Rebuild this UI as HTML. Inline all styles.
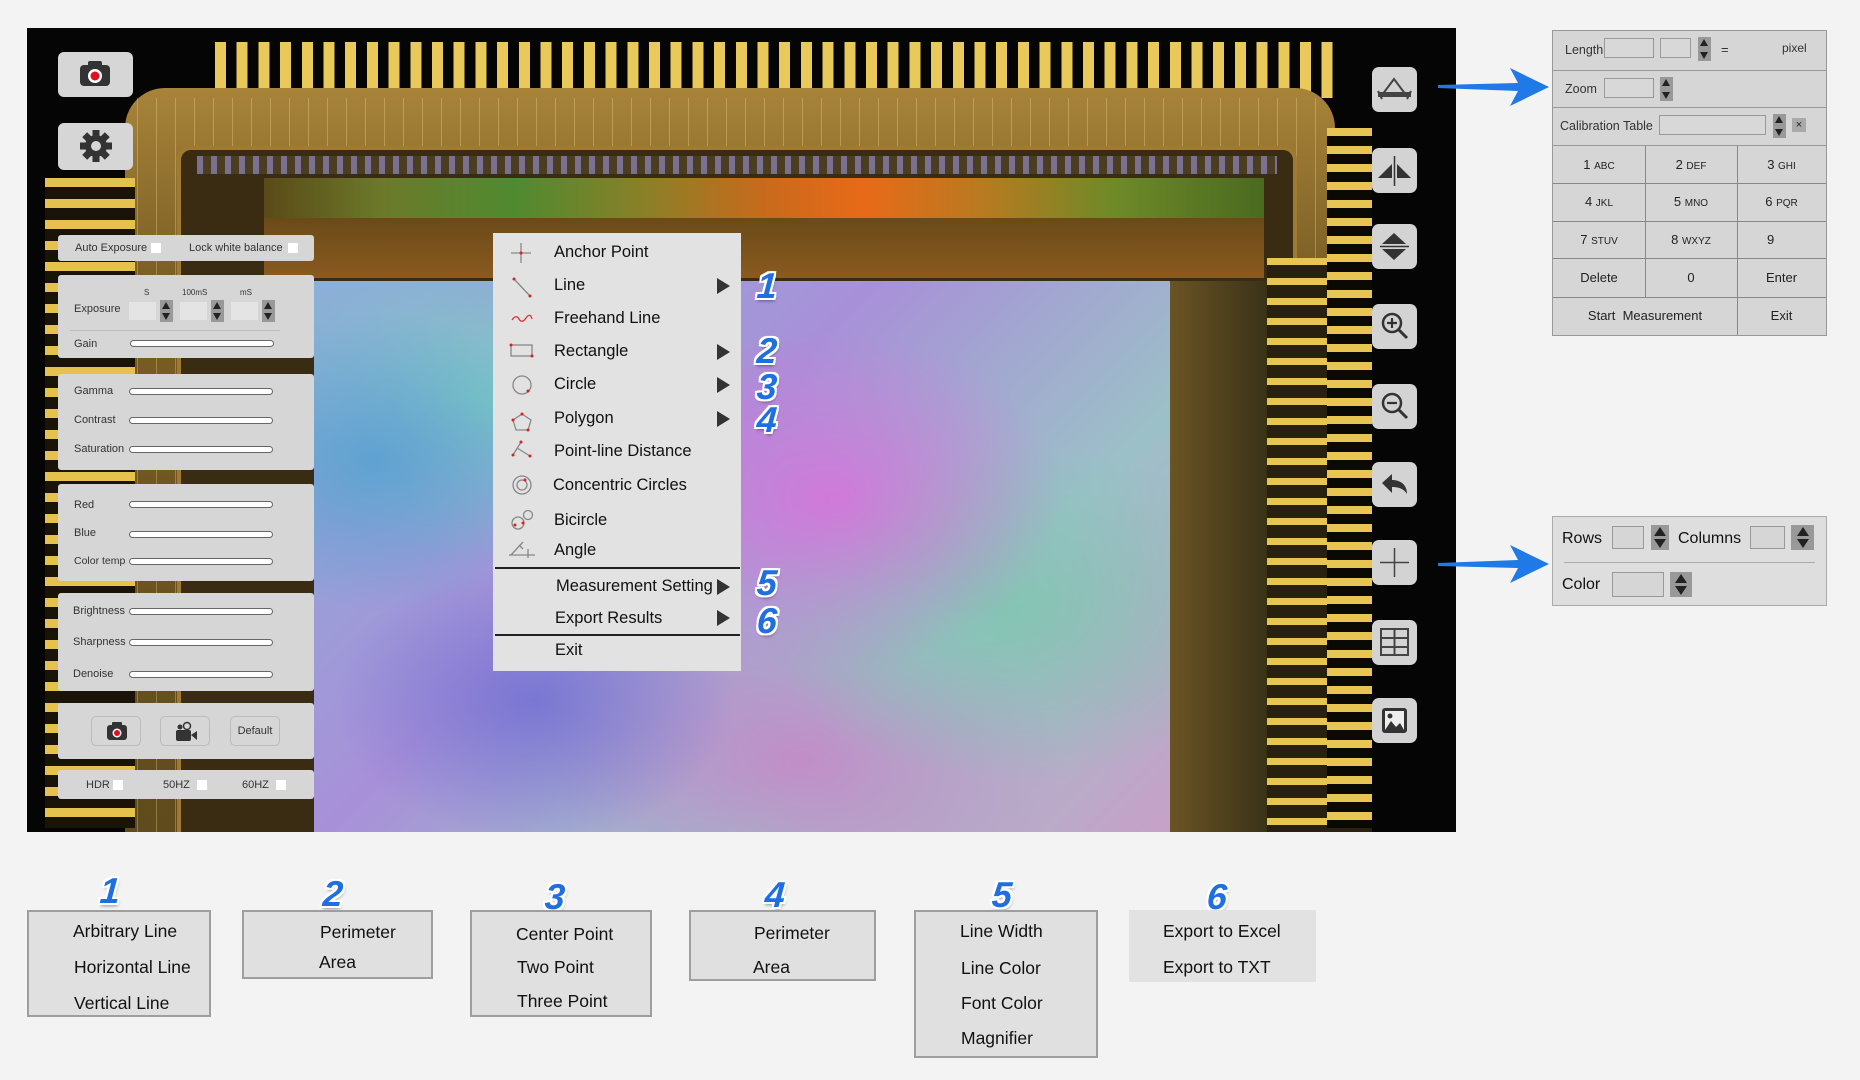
<!DOCTYPE html>
<html><head><meta charset="utf-8">
<style>
*{margin:0;padding:0;box-sizing:border-box}
body{width:1860px;height:1080px;background:#f3f3f3;position:relative;overflow:hidden;font-family:"Liberation Sans",Arial,sans-serif;color:#222}
.a{position:absolute}
.pan{position:absolute;background:#d6d6d6;border-radius:3px}
.lbl{position:absolute;font-size:11px;color:#333}
.sl{position:absolute;height:7px;background:#fff;border:1.5px solid #666;border-radius:4px}
.cb{position:absolute;width:10px;height:10px;background:#fff}
.rb{position:absolute;left:1372px;width:45px;height:45px;background:#d3d3d3;border-radius:7px}
.rb svg{position:absolute;left:0;top:0}
.mi{position:absolute;left:554px;font-size:16.5px;color:#111}
.tri{position:absolute;left:717px;width:0;height:0;border-top:8px solid transparent;border-bottom:8px solid transparent;border-left:13px solid #333}
.num{position:absolute;font-size:36px;font-weight:bold;font-style:italic;color:#1f6fe0;line-height:40px;text-shadow:-2px -2px 0 #fff,2px -2px 0 #fff,-2px 2px 0 #fff,2px 2px 0 #fff,0 2px 0 #fff,0 -2px 0 #fff,2px 0 0 #fff,-2px 0 0 #fff,1px 3px 3px rgba(0,0,0,.4);transform:skewX(-4deg)}
.box{position:absolute;background:#e0e0e0;border:2px solid #9e9e9e;font-size:17.5px;color:#111}
.box div{position:absolute}
.kp{position:absolute;border-right:1px solid #888;border-bottom:1px solid #888;font-size:13px;text-align:center;color:#222}
.kp small{font-size:10px}
.inp{position:absolute;background:#d8d8d8;border:1px solid #999}
.spin{position:absolute;width:13px;height:22px;background:#999}
.spin:before{content:"";position:absolute;left:2px;top:2px;border-left:4.5px solid transparent;border-right:4.5px solid transparent;border-bottom:7px solid #222}
.spin:after{content:"";position:absolute;left:2px;bottom:2px;border-left:4.5px solid transparent;border-right:4.5px solid transparent;border-top:7px solid #222}
.sp2{position:absolute;background:#999}
.sp2:before{content:"";position:absolute;left:50%;margin-left:-6px;top:2px;border-left:6px solid transparent;border-right:6px solid transparent;border-bottom:9px solid #222}
.sp2:after{content:"";position:absolute;left:50%;margin-left:-6px;bottom:2px;border-left:6px solid transparent;border-right:6px solid transparent;border-top:9px solid #222}
</style></head><body>

<!-- main image -->
<div class="a" style="left:27px;top:28px;width:1429px;height:804px;background:#050505;overflow:hidden">
  <div class="a" style="left:188px;top:14px;width:1120px;height:56px;background:repeating-linear-gradient(90deg,#e8c95a 0 11px,transparent 11px 21.7px)"></div>
  <div class="a" style="left:98px;top:60px;width:1210px;height:770px;border-radius:40px 40px 0 0;background:linear-gradient(180deg,#a8843a,#7a5e24 25%,#5e4a1c)"></div>
  <div class="a" style="left:110px;top:70px;width:1190px;height:750px;background:repeating-linear-gradient(90deg,rgba(255,230,150,.3) 0 1px,transparent 1px 19px)"></div>
  <div class="a" style="left:150px;top:118px;width:1120px;height:700px;background:#3a2c12;border-radius:14px;border:4px solid #a07a30"></div>
  <div class="a" style="left:170px;top:128px;width:1080px;height:18px;background:repeating-linear-gradient(90deg,#7a7090 0 6px,#4a3d20 6px 14px)"></div>
  <div class="a" style="left:237px;top:150px;width:1000px;height:40px;background:linear-gradient(90deg,#5a4a18,#6c7a2a 12%,#4f8a30 25%,#8a8028 38%,#c86a1c 50%,#e86a18 60%,#b87a20 72%,#6e8a28 85%,#4a6a20)"></div>
  <div class="a" style="left:237px;top:190px;width:1000px;height:60px;background:linear-gradient(180deg,#6a4a18,#8a5a20)"></div>
  <div class="a" style="left:18px;top:150px;width:90px;height:650px;background:repeating-linear-gradient(180deg,#e5c14e 0 9px,#1a1408 9px 21px)"></div>
  <div class="a" style="left:1240px;top:230px;width:105px;height:574px;background:repeating-linear-gradient(180deg,#e8c452 0 7px,#2a2010 7px 20px)"></div>
  <div class="a" style="left:1300px;top:100px;width:45px;height:700px;background:repeating-linear-gradient(180deg,#e8c452 0 8px,#0b0904 8px 18px)"></div>
  <div class="a" style="left:1143px;top:253px;width:97px;height:551px;background:linear-gradient(90deg,#6a5424,#3a3218)"></div>
  <div class="a" style="left:287px;top:253px;width:856px;height:551px;background:
    radial-gradient(ellipse 200px 150px at 60px 180px,rgba(90,160,210,.9),transparent),
    radial-gradient(ellipse 220px 160px at 170px 120px,rgba(120,210,190,.85),transparent),
    radial-gradient(ellipse 230px 170px at 520px 220px,rgba(220,110,220,.8),transparent),
    radial-gradient(ellipse 260px 170px at 700px 330px,rgba(120,200,170,.7),transparent),
    radial-gradient(ellipse 200px 140px at 220px 420px,rgba(110,110,210,.8),transparent),
    radial-gradient(ellipse 260px 170px at 490px 480px,rgba(210,120,200,.7),transparent),
    linear-gradient(135deg,#8ab0d8,#a890d8 40%,#9cc0c8 70%,#c8a0c8)"></div>
</div>

<!-- left buttons -->
<div class="a" style="left:58px;top:52px;width:75px;height:45px;background:#d6d6d6;border-radius:6px">
<svg width="75" height="45"><rect x="22" y="13" width="30" height="21" rx="4" fill="#333"/><rect x="30" y="9" width="14" height="6" rx="2" fill="#333"/><circle cx="37" cy="24" r="7" fill="#fff"/><circle cx="37" cy="24" r="4.5" fill="#e01020"/></svg></div>
<div class="a" style="left:58px;top:123px;width:75px;height:47px;background:#d6d6d6;border-radius:6px">
<svg width="75" height="47"><g transform="translate(38,23)" fill="#333"><circle r="11"/><g id="t"><rect x="-3.5" y="-16" width="7" height="8"/></g><use href="#t" transform="rotate(45)"/><use href="#t" transform="rotate(90)"/><use href="#t" transform="rotate(135)"/><use href="#t" transform="rotate(180)"/><use href="#t" transform="rotate(225)"/><use href="#t" transform="rotate(270)"/><use href="#t" transform="rotate(315)"/><circle r="5" fill="#d6d6d6"/></g></svg></div>

<!-- left panels -->
<div class="pan" style="left:58px;top:235px;width:256px;height:26px"></div>
<div class="lbl" style="left:75px;top:242px">Auto Exposure</div><div class="cb" style="left:151px;top:243px"></div>
<div class="lbl" style="left:189px;top:242px">Lock white balance</div><div class="cb" style="left:288px;top:243px"></div>

<div class="pan" style="left:58px;top:275px;width:256px;height:83px"></div>
<div class="lbl" style="left:144px;top:288px;font-size:8px">S</div>
<div class="lbl" style="left:182px;top:288px;font-size:8px">100mS</div>
<div class="lbl" style="left:240px;top:288px;font-size:8px">mS</div>
<div class="lbl" style="left:74px;top:303px">Exposure</div>
<div class="inp" style="left:129px;top:302px;width:27px;height:18px;background:#e4e4e4;border:none"></div><div class="spin" style="left:160px;top:300px"></div>
<div class="inp" style="left:180px;top:302px;width:27px;height:18px;background:#e4e4e4;border:none"></div><div class="spin" style="left:211px;top:300px"></div>
<div class="inp" style="left:231px;top:302px;width:27px;height:18px;background:#e4e4e4;border:none"></div><div class="spin" style="left:262px;top:300px"></div>
<div class="a" style="left:70px;top:330px;width:210px;height:1px;background:#bbb"></div>
<div class="lbl" style="left:74px;top:338px">Gain</div><div class="sl" style="left:130px;top:340px;width:144px"></div>

<div class="pan" style="left:58px;top:374px;width:256px;height:96px"></div>
<div class="lbl" style="left:74px;top:385px">Gamma</div><div class="sl" style="left:129px;top:388px;width:144px"></div>
<div class="lbl" style="left:74px;top:414px">Contrast</div><div class="sl" style="left:129px;top:417px;width:144px"></div>
<div class="lbl" style="left:74px;top:443px">Saturation</div><div class="sl" style="left:129px;top:446px;width:144px"></div>

<div class="pan" style="left:58px;top:484px;width:256px;height:97px"></div>
<div class="lbl" style="left:74px;top:499px">Red</div><div class="sl" style="left:129px;top:501px;width:144px"></div>
<div class="lbl" style="left:74px;top:527px">Blue</div><div class="sl" style="left:129px;top:531px;width:144px"></div>
<div class="lbl" style="left:74px;top:555px;font-size:10.5px">Color temp</div><div class="sl" style="left:129px;top:558px;width:144px"></div>

<div class="pan" style="left:58px;top:593px;width:256px;height:98px"></div>
<div class="lbl" style="left:73px;top:605px">Brightness</div><div class="sl" style="left:129px;top:608px;width:144px"></div>
<div class="lbl" style="left:73px;top:636px">Sharpness</div><div class="sl" style="left:129px;top:639px;width:144px"></div>
<div class="lbl" style="left:73px;top:668px">Denoise</div><div class="sl" style="left:129px;top:671px;width:144px"></div>

<div class="pan" style="left:58px;top:703px;width:256px;height:56px"></div>
<div class="a" style="left:91px;top:716px;width:50px;height:30px;border:1px solid #bbb;border-radius:5px">
<svg width="50" height="30"><rect x="15" y="8" width="20" height="15" rx="3" fill="#333"/><rect x="20" y="5" width="10" height="5" rx="1" fill="#333"/><circle cx="25" cy="16" r="4.5" fill="#fff"/><circle cx="25" cy="16" r="3" fill="#e01020"/></svg></div>
<div class="a" style="left:160px;top:716px;width:50px;height:30px;border:1px solid #bbb;border-radius:5px">
<svg width="50" height="30"><rect x="15" y="13" width="15" height="11" rx="2" fill="#333"/><polygon points="30,18 36,14 36,23" fill="#333"/><circle cx="19" cy="10" r="2.5" fill="#333"/><circle cx="26" cy="9" r="3.5" fill="none" stroke="#333" stroke-width="1.5"/></svg></div>
<div class="a" style="left:230px;top:716px;width:50px;height:30px;border:1px solid #bbb;border-radius:5px;font-size:11px;text-align:center;line-height:28px;color:#333">Default</div>

<div class="pan" style="left:58px;top:770px;width:256px;height:29px"></div>
<div class="lbl" style="left:86px;top:779px">HDR</div><div class="cb" style="left:113px;top:780px"></div>
<div class="lbl" style="left:163px;top:779px">50HZ</div><div class="cb" style="left:197px;top:780px"></div>
<div class="lbl" style="left:242px;top:779px">60HZ</div><div class="cb" style="left:276px;top:780px"></div>

<!-- context menu -->
<div class="a" style="left:493px;top:233px;width:248px;height:438px;background:#e2e2e2"></div>
<div class="a" style="left:495px;top:567px;width:245px;height:2px;background:#222"></div>
<div class="a" style="left:495px;top:634px;width:245px;height:2px;background:#222"></div>
<svg class="a" style="left:493px;top:233px" width="80" height="330">
 <g stroke="#888" stroke-width="1.3" fill="none">
  <path d="M28 10v20M18 20h20"/>
  <path d="M21 46l16 17"/>
  <rect x="18" y="112" width="21" height="11"/>
  <circle cx="29" cy="152" r="9"/>
  <polygon points="29,181 38,187 35,197 23,197 20,187"/>
  <path d="M28 209l-8 13M24 215l13 8"/>
  <circle cx="29" cy="252" r="9"/><circle cx="29" cy="252" r="5"/>
  <circle cx="25" cy="290" r="6"/><circle cx="35" cy="282" r="4.5"/>
  <path d="M16 322h26M18 322l12-13M26 312l4 4M35 316v9"/>
 </g>
 <g fill="#e02020">
  <circle cx="28" cy="20" r="1.5"/><circle cx="21" cy="46" r="1.5"/><circle cx="37" cy="63" r="1.5"/>
  <circle cx="18" cy="112" r="1.5"/><circle cx="39" cy="123" r="1.5"/>
  <circle cx="35" cy="158" r="1.5"/><circle cx="29" cy="181" r="1.5"/><circle cx="20" cy="187" r="1.5"/><circle cx="35" cy="197" r="1.5"/>
  <circle cx="28" cy="209" r="1.5"/><circle cx="20" cy="222" r="1.5"/><circle cx="37" cy="223" r="1.5"/>
  <circle cx="32" cy="247" r="1.5"/><circle cx="22" cy="292" r="1.5"/><circle cx="30" cy="290" r="1.5"/>
 </g>
 <path d="M19 87q4-6 7-1t7-1 6 1" stroke="#e03030" stroke-width="1.3" fill="none"/>
</svg>
<div class="mi" style="top:243px">Anchor Point</div>
<div class="mi" style="top:276px">Line</div><div class="tri" style="top:278px"></div>
<div class="mi" style="top:309px">Freehand Line</div>
<div class="mi" style="top:342px">Rectangle</div><div class="tri" style="top:344px"></div>
<div class="mi" style="top:375px">Circle</div><div class="tri" style="top:377px"></div>
<div class="mi" style="top:409px">Polygon</div><div class="tri" style="top:411px"></div>
<div class="mi" style="top:442px">Point-line Distance</div>
<div class="mi" style="top:476px;left:553px">Concentric Circles</div>
<div class="mi" style="top:511px">Bicircle</div>
<div class="mi" style="top:541px">Angle</div>
<div class="mi" style="top:577px;left:556px">Measurement Setting</div><div class="tri" style="top:579px"></div>
<div class="mi" style="top:609px;left:555px">Export Results</div><div class="tri" style="top:610px"></div>
<div class="mi" style="top:641px;left:555px">Exit</div>

<div class="num" style="left:757px;top:266px">1</div>
<div class="num" style="left:757px;top:331px">2</div>
<div class="num" style="left:757px;top:367px">3</div>
<div class="num" style="left:757px;top:400px">4</div>
<div class="num" style="left:757px;top:563px">5</div>
<div class="num" style="left:757px;top:601px">6</div>

<!-- right buttons -->
<div class="rb" style="top:67px"><svg width="45" height="45"><path d="M10 28l12-16 12 16" fill="none" stroke="#444" stroke-width="2"/><rect x="6" y="25" width="33" height="5" fill="#444"/><path d="M6 24l4 8M39 24l-4 8" stroke="#444" stroke-width="2"/></svg></div>
<div class="rb" style="top:148px"><svg width="45" height="45"><polygon points="6,30 20,16 20,30" fill="#333"/><polygon points="39,30 25,16 25,30" fill="#333"/><path d="M22.5 8v30" stroke="#333" stroke-width="1.5"/></svg></div>
<div class="rb" style="top:224px"><svg width="45" height="45"><polygon points="22,9 34,20 10,20" fill="#333"/><polygon points="22,36 34,25 10,25" fill="#333"/><path d="M8 22.5h29" stroke="#333" stroke-width="1.5"/></svg></div>
<div class="rb" style="top:304px"><svg width="45" height="45"><circle cx="20" cy="19" r="9" fill="none" stroke="#333" stroke-width="2.5"/><path d="M26 25l9 9" stroke="#333" stroke-width="3"/><path d="M20 14v10M15 19h10" stroke="#333" stroke-width="2.2"/></svg></div>
<div class="rb" style="top:384px"><svg width="45" height="45"><circle cx="20" cy="19" r="9" fill="none" stroke="#333" stroke-width="2.5"/><path d="M26 25l9 9" stroke="#333" stroke-width="3"/><path d="M15 19h10" stroke="#333" stroke-width="2.2"/></svg></div>
<div class="rb" style="top:462px"><svg width="45" height="45"><path d="M10 21l10-9v6c9 0 15 5 15 14-3-5-8-7-15-7v6z" fill="#333"/></svg></div>
<div class="rb" style="top:540px"><svg width="45" height="45"><path d="M22.5 8v29M8 22.5h29" stroke="#444" stroke-width="1.5"/></svg></div>
<div class="rb" style="top:620px"><svg width="45" height="45"><g fill="none" stroke="#444" stroke-width="2"><rect x="9" y="9" width="27" height="26"/><path d="M22.5 9v26M9 18h27M9 27h27"/></g></svg></div>
<div class="rb" style="top:698px"><svg width="45" height="45"><rect x="10" y="10" width="25" height="25" rx="3" fill="#333"/><rect x="13" y="13" width="19" height="19" fill="#eee"/><polygon points="13,32 19,23 24,29 28,25 32,32" fill="#333"/><circle cx="18" cy="18" r="2.5" fill="#333"/></svg></div>

<!-- arrows -->
<svg class="a" style="left:1430px;top:60px" width="125" height="60"><polygon points="8,25 88,23 80,8 119,27 80,46 88,31 8,28" fill="#1f7ae8"/></svg>
<svg class="a" style="left:1430px;top:536px" width="125" height="60"><polygon points="8,27 88,24 80,9 119,28 80,47 88,32 8,30" fill="#1f7ae8"/></svg>

<!-- calibration panel -->
<div class="a" style="left:1552px;top:30px;width:275px;height:306px;background:#d6d6d6;border:1.5px solid #999"></div>
<div class="a" style="left:1552px;top:70px;width:275px;height:1px;background:#999"></div>
<div class="a" style="left:1552px;top:107px;width:275px;height:1px;background:#999"></div>
<div class="a" style="left:1552px;top:145px;width:275px;height:1px;background:#999"></div>
<div class="lbl" style="left:1565px;top:43px;font-size:12.5px">Length</div>
<div class="inp" style="left:1604px;top:38px;width:50px;height:20px"></div>
<div class="inp" style="left:1660px;top:38px;width:31px;height:20px"></div>
<div class="spin" style="left:1698px;top:37px;height:24px"></div>
<div class="lbl" style="left:1721px;top:42px;font-size:13px">=</div>
<div class="lbl" style="left:1782px;top:41px;font-size:12px">pixel</div>
<div class="lbl" style="left:1565px;top:82px;font-size:12.5px">Zoom</div>
<div class="inp" style="left:1604px;top:78px;width:50px;height:20px"></div>
<div class="spin" style="left:1660px;top:77px;height:24px"></div>
<div class="lbl" style="left:1560px;top:119px;font-size:12.5px">Calibration Table</div>
<div class="inp" style="left:1659px;top:115px;width:107px;height:20px"></div>
<div class="spin" style="left:1773px;top:114px;height:24px"></div>
<div class="a" style="left:1792px;top:118px;width:14px;height:14px;background:#aaa;font-size:11px;text-align:center;line-height:14px">×</div>
<div class="kp" style="left:1553px;top:146px;width:93px;height:38px;line-height:37px">1 <small>ABC</small></div>
<div class="kp" style="left:1645px;top:146px;width:93px;height:38px;line-height:37px">2 <small>DEF</small></div>
<div class="kp" style="left:1737px;top:146px;width:89px;height:38px;line-height:37px;border-right:none">3 <small>GHI</small></div>
<div class="kp" style="left:1553px;top:183px;width:93px;height:39px;line-height:38px">4 <small>JKL</small></div>
<div class="kp" style="left:1645px;top:183px;width:93px;height:39px;line-height:38px">5 <small>MNO</small></div>
<div class="kp" style="left:1737px;top:183px;width:89px;height:39px;line-height:38px;border-right:none">6 <small>PQR</small></div>
<div class="kp" style="left:1553px;top:221px;width:93px;height:38px;line-height:37px">7 <small>STUV</small></div>
<div class="kp" style="left:1645px;top:221px;width:93px;height:38px;line-height:37px">8 <small>WXYZ</small></div>
<div class="kp" style="left:1737px;top:221px;width:89px;height:38px;line-height:37px;border-right:none;text-align:left;padding-left:30px">9</div>
<div class="kp" style="left:1553px;top:258px;width:93px;height:40px;line-height:39px">Delete</div>
<div class="kp" style="left:1645px;top:258px;width:93px;height:40px;line-height:39px">0</div>
<div class="kp" style="left:1737px;top:258px;width:89px;height:40px;line-height:39px;border-right:none">Enter</div>
<div class="kp" style="left:1553px;top:297px;width:185px;height:38px;line-height:38px;border-bottom:none">Start&nbsp; Measurement</div>
<div class="kp" style="left:1737px;top:297px;width:89px;height:38px;line-height:38px;border:none">Exit</div>

<!-- grid panel -->
<div class="a" style="left:1552px;top:516px;width:275px;height:90px;background:#dedede;border:1.5px solid #aaa"></div>
<div class="a" style="left:1564px;top:562px;width:251px;height:1px;background:#aaa"></div>
<div class="lbl" style="left:1562px;top:530px;font-size:16px;color:#111">Rows</div>
<div class="inp" style="left:1612px;top:526px;width:32px;height:23px;background:#d6d6d6"></div>
<div class="sp2" style="left:1651px;top:525px;width:18px;height:25px"></div>
<div class="lbl" style="left:1678px;top:530px;font-size:16px;color:#111">Columns</div>
<div class="inp" style="left:1750px;top:526px;width:35px;height:23px;background:#d6d6d6"></div>
<div class="sp2" style="left:1791px;top:525px;width:23px;height:25px"></div>
<div class="lbl" style="left:1562px;top:576px;font-size:16px;color:#111">Color</div>
<div class="inp" style="left:1612px;top:572px;width:52px;height:25px;background:#d6d6d6"></div>
<div class="sp2" style="left:1670px;top:572px;width:22px;height:25px"></div>

<!-- bottom boxes -->
<div class="num" style="left:100px;top:871px">1</div>
<div class="box" style="left:27px;top:910px;width:184px;height:107px"><div style="left:44px;top:9px">Arbitrary Line</div><div style="left:45px;top:45px">Horizontal Line</div><div style="left:45px;top:81px">Vertical Line</div></div>
<div class="num" style="left:323px;top:874px">2</div>
<div class="box" style="left:242px;top:910px;width:191px;height:69px"><div style="left:76px;top:10px">Perimeter</div><div style="left:75px;top:40px">Area</div></div>
<div class="num" style="left:545px;top:877px">3</div>
<div class="box" style="left:470px;top:910px;width:182px;height:107px"><div style="left:44px;top:12px">Center Point</div><div style="left:45px;top:45px">Two Point</div><div style="left:45px;top:79px">Three Point</div></div>
<div class="num" style="left:765px;top:875px">4</div>
<div class="box" style="left:689px;top:910px;width:187px;height:71px"><div style="left:63px;top:11px">Perimeter</div><div style="left:62px;top:45px">Area</div></div>
<div class="num" style="left:992px;top:875px">5</div>
<div class="box" style="left:914px;top:910px;width:184px;height:148px"><div style="left:44px;top:9px">Line Width</div><div style="left:45px;top:46px">Line Color</div><div style="left:45px;top:81px">Font Color</div><div style="left:45px;top:116px">Magnifier</div></div>
<div class="num" style="left:1207px;top:877px">6</div>
<div class="box" style="left:1129px;top:910px;width:187px;height:72px;border:none;background:#e2e2e2"><div style="left:34px;top:11px">Export to Excel</div><div style="left:34px;top:47px">Export to TXT</div></div>

</body></html>
